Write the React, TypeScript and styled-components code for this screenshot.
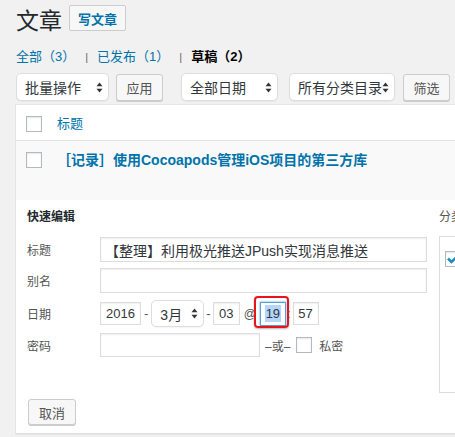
import React from 'react';
import styled, { createGlobalStyle } from 'styled-components';

const Global = createGlobalStyle`
  html, body { margin: 0; padding: 0; background: #f1f1f1; overflow: hidden; }
  body {
    font-family: "Liberation Sans", "Noto Sans CJK SC", sans-serif;
    color: #444;
    font-size: 13px;
  }
  * { box-sizing: border-box; }
`;

const Page = styled.div`
  width: 455px;
  height: 437px;
  overflow: hidden;
  padding: 5px 0 0 16px;
`;

const Header = styled.div`
  display: flex;
  align-items: flex-start;
  height: 31px;
`;

const PageTitle = styled.h1`
  margin: 2px 7px 0 0;
  font-size: 23px;
  line-height: 29px;
  font-weight: 400;
  color: #23282d;
`;

const AddButton = styled.a`
  display: inline-flex;
  align-items: center;
  justify-content: center;
  width: 57px;
  height: 26px;
  border: 1px solid #ccc;
  border-radius: 2px;
  background: #f7f7f7;
  color: #0073aa;
  font-size: 13px;
  font-weight: 600;
  text-decoration: none;
`;

const StatusList = styled.ul`
  list-style: none;
  margin: 11px 0 0;
  padding: 0;
  display: flex;
  height: 20px;
  line-height: 20px;
  font-size: 13px;
`;

const StatusItem = styled.li<{ $current?: boolean }>`
  color: ${(p) => (p.$current ? '#000' : '#0073aa')};
  font-weight: ${(p) => (p.$current ? 600 : 400)};
`;

const Divider = styled.span`
  color: #666;
  font-size: 11px;
  margin: 0 9px 0 10px;
`;

const FilterRow = styled.div`
  display: flex;
  align-items: center;
  margin-top: 6px;
  height: 28px;
`;

const SelectBox = styled.div<{ $w: number; $h?: number; $ml?: number }>`
  display: flex;
  flex: none;
  align-items: center;
  justify-content: space-between;
  width: ${(p) => p.$w}px;
  height: ${(p) => p.$h ?? 28}px;
  margin-left: ${(p) => p.$ml ?? 0}px;
  padding: 0 5px 0 8px;
  background: #fff;
  border: 1px solid #ddd;
  border-radius: 5px;
  box-shadow: 0 1px 1px rgba(0, 0, 0, 0.04);
  color: #32373c;
  font-size: 14px;
  white-space: nowrap;
`;

const Button = styled.button<{ $w: number; $ml?: number }>`
  flex: none;
  width: ${(p) => p.$w}px;
  height: 27px;
  margin-left: ${(p) => p.$ml ?? 0}px;
  padding: 0;
  border: 1px solid #ccc;
  border-radius: 3px;
  background: #f7f7f7;
  box-shadow: 0 1px 0 #ccc;
  color: #555;
  font-family: inherit;
  font-size: 13px;
`;

const Table = styled.div`
  margin: 3px 0 0 -1px;
  width: 660px;
  background: #fff;
  border: 1px solid #e5e5e5;
`;

const HeadRow = styled.div`
  display: flex;
  align-items: flex-start;
  height: 36px;
  padding: 11px 0 0 10px;
  border-bottom: 1px solid #e1e1e1;
`;

const PostRow = styled.div`
  display: flex;
  align-items: flex-start;
  height: 59px;
  padding: 11px 0 0 10px;
  background: #f9f9f9;
`;

const CheckBox = styled.span<{ $ml?: number }>`
  display: inline-block;
  flex: none;
  width: 16px;
  height: 16px;
  margin-left: ${(p) => p.$ml ?? 0}px;
  background: #fff;
  border: 1px solid #b4b9be;
  box-shadow: inset 0 1px 2px rgba(0, 0, 0, 0.1);
  position: relative;
`;

const HeadLabel = styled.span`
  margin-left: 15px;
  line-height: 16px;
  font-size: 13px;
  color: #0073aa;
`;

const PostTitle = styled.a`
  margin-left: 15px;
  line-height: 16px;
  font-size: 14px;
  font-weight: 600;
  color: #0073aa;
  white-space: nowrap;
`;

const QuickEdit = styled.div`
  display: flex;
  height: 234px;
  padding: 9px 0 0 11px;
  border-bottom: 1px solid #e1e1e1;
`;

const LeftCol = styled.div`
  width: 400px;
  flex: none;
  display: flex;
  flex-direction: column;
`;

const Legend = styled.div`
  height: 17px;
  line-height: 17px;
  font-size: 12px;
  font-weight: 600;
  color: #23282d;
  margin-bottom: 11px;
`;

const FieldRow = styled.div<{ $h: number; $mb: number }>`
  display: flex;
  align-items: center;
  height: ${(p) => p.$h}px;
  margin-bottom: ${(p) => p.$mb}px;
`;

const Label = styled.span`
  width: 73px;
  flex: none;
  font-size: 12px;
  color: #555;
`;

const TextInput = styled.div<{ $w?: number; $h?: number; $focus?: boolean; $center?: boolean }>`
  width: ${(p) => (p.$w ? `${p.$w}px` : 'auto')};
  flex: ${(p) => (p.$w ? 'none' : '1')};
  height: ${(p) => p.$h ?? 25}px;
  display: flex;
  align-items: center;
  justify-content: ${(p) => (p.$center ? 'center' : 'flex-start')};
  padding: ${(p) => (p.$center ? '0' : '0 4px')};
  background: #fff;
  border: 1px solid ${(p) => (p.$focus ? '#5b9dd9' : '#ddd')};
  box-shadow: ${(p) =>
    p.$focus ? '0 0 2px rgba(30, 140, 190, 0.8)' : 'inset 0 1px 2px rgba(0, 0, 0, 0.07)'};
  color: #32373c;
  font-size: ${(p) => (p.$center ? 13 : 14)}px;
  white-space: nowrap;
  overflow: hidden;
`;

const Sep = styled.span<{ $l: number; $r: number; $size?: number }>`
  margin: 0 ${(p) => p.$r}px 0 ${(p) => p.$l}px;
  color: #555;
  font-size: ${(p) => p.$size ?? 13}px;
`;

const Annotated = styled.span`
  position: relative;
  display: inline-flex;
  &::after {
    content: '';
    position: absolute;
    left: -6px;
    right: -3px;
    top: -6px;
    bottom: -2px;
    border: 2.5px solid #e8141a;
    border-radius: 4px;
    box-shadow: 0 1px 2px rgba(0, 0, 0, 0.3);
  }
`;

const Selected = styled.span`
  background: #b4d5fe;
  padding: 1px 1px;
`;

const SmallText = styled.span<{ $ml: number }>`
  margin-left: ${(p) => p.$ml}px;
  font-size: 12px;
  color: #555;
`;

const CancelButton = styled(Button)`
  width: 48px;
  height: 26px;
  margin: 42px 0 0 1px;
  font-size: 13px;
`;

const RightCol = styled.div`
  margin-left: 12px;
  flex: none;
  display: flex;
  flex-direction: column;
`;

const CatLabel = styled.div`
  height: 17px;
  line-height: 17px;
  font-size: 12px;
  color: #555;
  margin-bottom: 10px;
`;

const CatBox = styled.div`
  width: 200px;
  height: 157px;
  border: 1px solid #ddd;
  padding: 14px 0 0 5px;
`;

const Arrows = () => (
  <svg width="7" height="11" viewBox="0 0 7 11" style={{ flex: 'none' }}>
    <path d="M3.5 0.5 L6.5 4.3 L0.5 4.3 Z" fill="#333" />
    <path d="M3.5 10.5 L6.5 6.7 L0.5 6.7 Z" fill="#333" />
  </svg>
);

const Check = () => (
  <svg width="14" height="14" viewBox="0 0 14 14" style={{ position: 'absolute', left: 0, top: 0 }}>
    <path d="M2 6.5 L5.5 10 L12.5 3" fill="none" stroke="#1e8cbe" strokeWidth="2.6" />
  </svg>
);

export default function App() {
  return (
    <>
      <Global />
      <Page>
        <Header>
          <PageTitle>文章</PageTitle>
          <AddButton>写文章</AddButton>
        </Header>
        <StatusList>
          <StatusItem>全部（3）</StatusItem>
          <Divider>|</Divider>
          <StatusItem>已发布（1）</StatusItem>
          <Divider>|</Divider>
          <StatusItem $current>草稿（2）</StatusItem>
        </StatusList>
        <FilterRow>
          <SelectBox $w={93}>
            批量操作
            <Arrows />
          </SelectBox>
          <Button $w={47} $ml={7}>应用</Button>
          <SelectBox $w={97} $ml={18}>
            全部日期
            <Arrows />
          </SelectBox>
          <SelectBox $w={106} $ml={11}>
            所有分类目录
            <Arrows />
          </SelectBox>
          <Button $w={47} $ml={8}>筛选</Button>
        </FilterRow>
        <Table>
          <HeadRow>
            <CheckBox />
            <HeadLabel>标题</HeadLabel>
          </HeadRow>
          <PostRow>
            <CheckBox />
            <PostTitle>［记录］使用Cocoapods管理iOS项目的第三方库</PostTitle>
          </PostRow>
          <QuickEdit>
            <LeftCol>
              <Legend>快速编辑</Legend>
              <FieldRow $h={25} $mb={6}>
                <Label>标题</Label>
                <TextInput>【整理】利用极光推送JPush实现消息推送</TextInput>
              </FieldRow>
              <FieldRow $h={25} $mb={5}>
                <Label>别名</Label>
                <TextInput />
              </FieldRow>
              <FieldRow $h={31} $mb={4}>
                <Label>日期</Label>
                <TextInput $w={41} $h={23} $center>2016</TextInput>
                <Sep $l={3} $r={3}>-</Sep>
                <SelectBox $w={53} $h={27}>
                  3月
                  <Arrows />
                </SelectBox>
                <Sep $l={2} $r={2}>-</Sep>
                <TextInput $w={27} $h={23} $center>03</TextInput>
                <Sep $l={4} $r={4} $size={12}>@</Sep>
                <Annotated>
                  <TextInput $w={26} $h={24} $focus $center>
                    <Selected>19</Selected>
                  </TextInput>
                </Annotated>
                <Sep $l={1} $r={2}>:</Sep>
                <TextInput $w={26} $h={23} $center>57</TextInput>
              </FieldRow>
              <FieldRow $h={24} $mb={0}>
                <Label>密码</Label>
                <TextInput $w={160} $h={24} />
                <SmallText $ml={5}>–或–</SmallText>
                <CheckBox $ml={6} />
                <SmallText $ml={7}>私密</SmallText>
              </FieldRow>
              <CancelButton $w={48}>取消</CancelButton>
            </LeftCol>
            <RightCol>
              <CatLabel>分类目录</CatLabel>
              <CatBox>
                <CheckBox>
                  <Check />
                </CheckBox>
              </CatBox>
            </RightCol>
          </QuickEdit>
        </Table>
      </Page>
    </>
  );
}
